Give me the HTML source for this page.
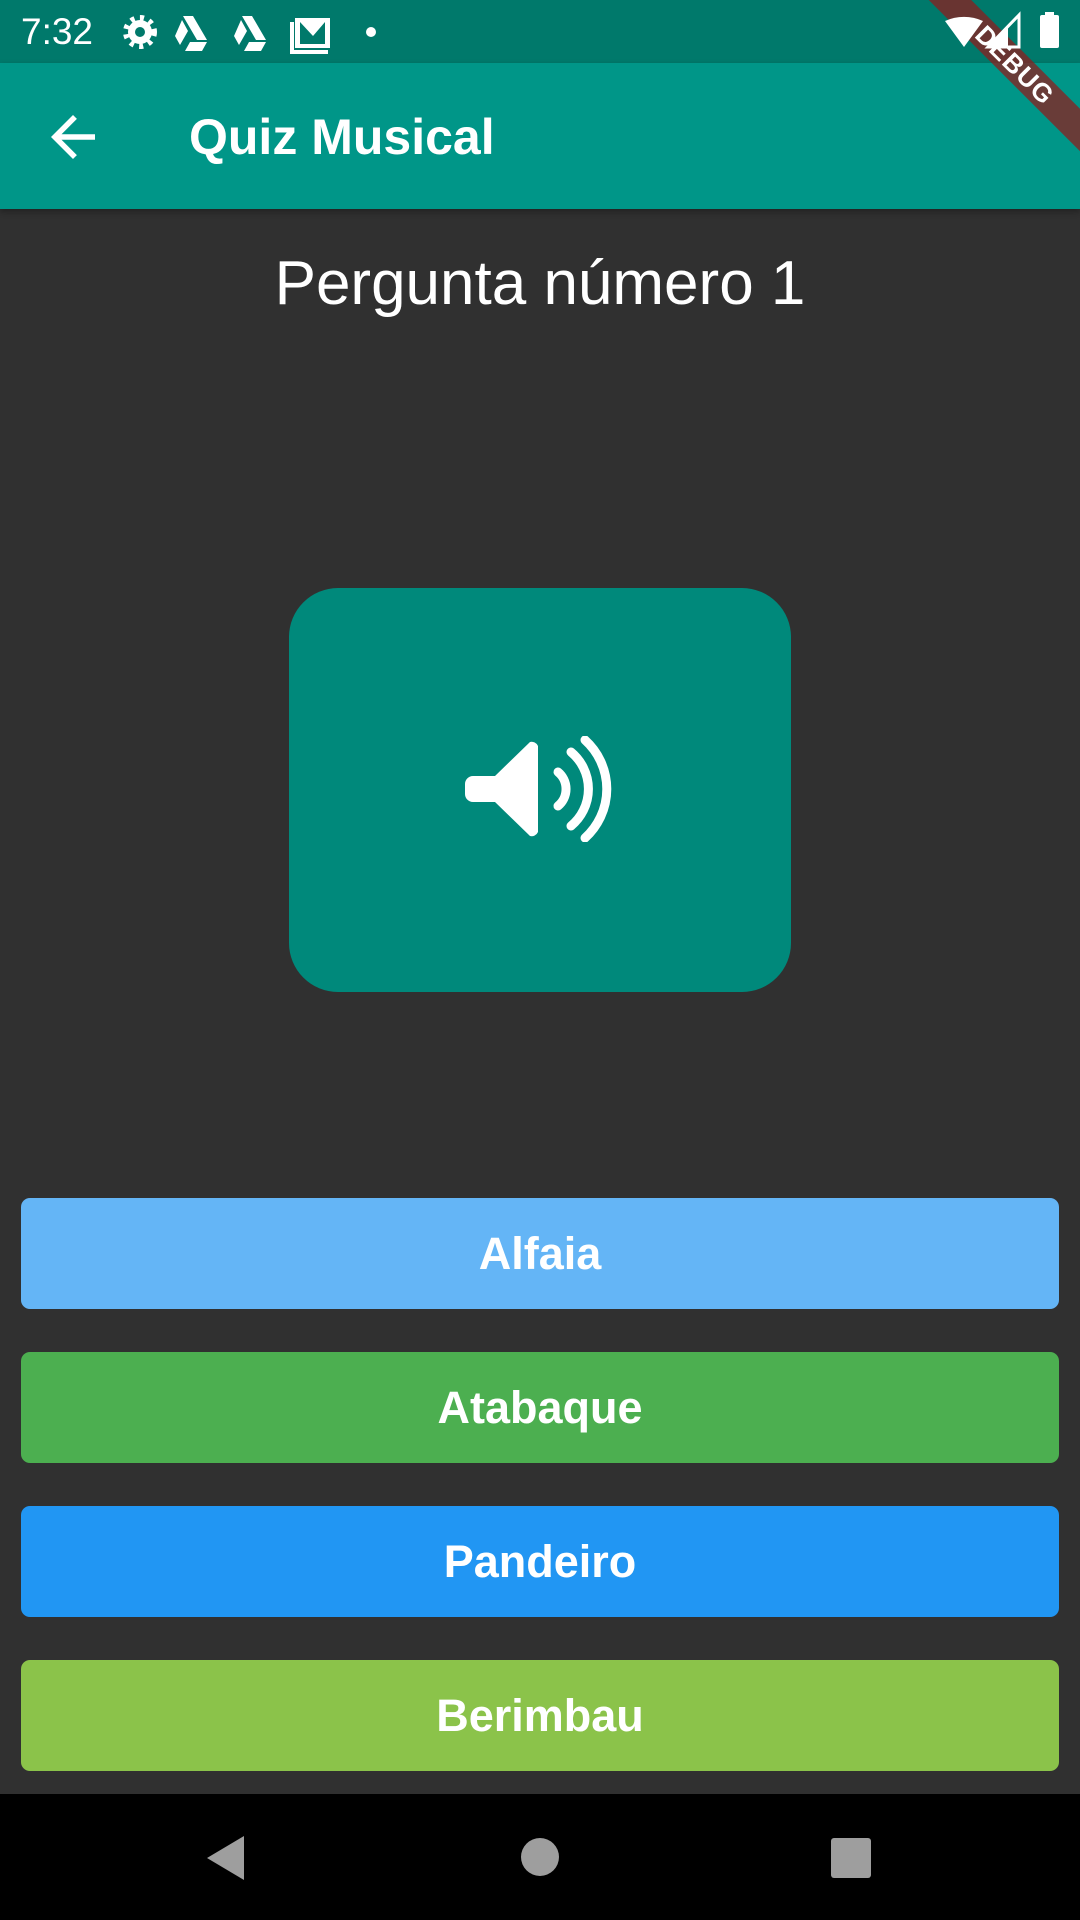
<!DOCTYPE html>
<html><head><meta charset="utf-8"><style>
*{margin:0;padding:0;box-sizing:border-box}
body{width:1080px;height:1920px;background:#303030;font-family:"Liberation Sans",sans-serif;position:relative;overflow:hidden;color:#fff}
.abs{position:absolute}
.btn{position:absolute;left:21px;width:1038px;height:111px;border-radius:9px;display:flex;align-items:center;justify-content:center;font-size:45px;font-weight:bold;color:#fff}
</style></head><body>
<div class="abs" style="left:0;top:0;width:1080px;height:63px;background:#00796b"></div>
<div class="abs" style="left:21px;top:11px;font-size:37px;line-height:42px">7:32</div>
<svg class="abs" style="left:120px;top:14px" width="340" height="40" viewBox="0 0 340 40" fill="#fff">
<circle cx="20" cy="18" r="12"/><circle cx="20" cy="18" r="5" fill="#00796b"/>
<g stroke="#fff" stroke-width="6" stroke-dasharray="4 5.4"><circle cx="20" cy="18" r="14" fill="none"/></g>
<path d="M63 2h10l14 24h-10zM62 6l6 11-8 14-5-9zM70 28h17l-5 9H65z"/>
<path d="M122 2h10l14 24h-10zM121 6l6 11-8 14-5-9zM129 28h17l-5 9H124z"/>
<path d="M175 4h35v30h-35zM180 8v22h25V8l-12 14z" fill-rule="evenodd"/>
<path d="M170 8v32h38v-4h-34V8z"/>
<circle cx="251" cy="18" r="5"/>
</svg>
<div class="abs" style="left:0;top:63px;width:1080px;height:146px;background:#009688;box-shadow:0 3px 6px rgba(0,0,0,.3)"></div>
<svg class="abs" style="left:40px;top:104px" width="66" height="66" viewBox="0 0 24 24"><path d="M20 11H7.83l5.59-5.59L12 4l-8 8 8 8 1.41-1.41L7.83 13H20v-2z" fill="#fff"/></svg>
<div class="abs" style="left:189px;top:107px;font-size:50px;font-weight:bold;line-height:60px">Quiz Musical</div>
<div class="abs" style="left:885px;top:50px;width:260px;height:30px;background:rgba(140,30,30,.75);transform:rotate(45deg);color:#fff;font-size:26px;font-weight:bold;text-align:center;line-height:30px;letter-spacing:1px">DEBUG</div>
<svg class="abs" style="left:940px;top:10px" width="130" height="40" viewBox="0 0 130 40" fill="#fff">
<path d="M5 11a46 46 0 0 1 38 0L24 37z"/>
<path d="M79 5v32H48z" fill="none" stroke="#fff" stroke-width="3"/><path d="M68 16v21H48z"/>
<rect x="100" y="5" width="19" height="33" rx="2"/><rect x="105" y="2" width="9" height="5"/>
</svg>
<div class="abs" style="left:0;top:248px;width:1080px;text-align:center;font-size:62px;line-height:72px">Pergunta número 1</div>
<div class="abs" style="left:289px;top:588px;width:502px;height:404px;border-radius:49px;background:#00897b"></div>
<svg class="abs" style="left:465px;top:736px" width="150" height="106" viewBox="0 0 150 106" fill="#fff">
<path d="M8 40h22L65 6a7 7 0 0 1 8 4v86a7 7 0 0 1-8 4L30 66H8a8 8 0 0 1-8-8V48a8 8 0 0 1 8-8z"/>
<path d="M93 36a22 22 0 0 1 0 34" stroke="#fff" stroke-width="9" fill="none" stroke-linecap="round"/>
<path d="M106 16a48 48 0 0 1 0 74" stroke="#fff" stroke-width="9" fill="none" stroke-linecap="round"/>
<path d="M120 4a66 66 0 0 1 0 98" stroke="#fff" stroke-width="9" fill="none" stroke-linecap="round"/>
</svg>
<div class="btn" style="top:1198px;background:#64b5f6">Alfaia</div>
<div class="btn" style="top:1352px;background:#4caf50">Atabaque</div>
<div class="btn" style="top:1506px;background:#2196f3">Pandeiro</div>
<div class="btn" style="top:1660px;background:#8bc34a">Berimbau</div>
<div class="abs" style="left:0;top:1794px;width:1080px;height:126px;background:#000"></div>
<svg class="abs" style="left:0;top:1794px" width="1080" height="126" viewBox="0 0 1080 126" fill="#9e9e9e">
<path d="M244 42v44L207 64z"/><circle cx="540" cy="63" r="19"/><rect x="831" y="44" width="40" height="40" rx="3"/>
</svg>
</body></html>
